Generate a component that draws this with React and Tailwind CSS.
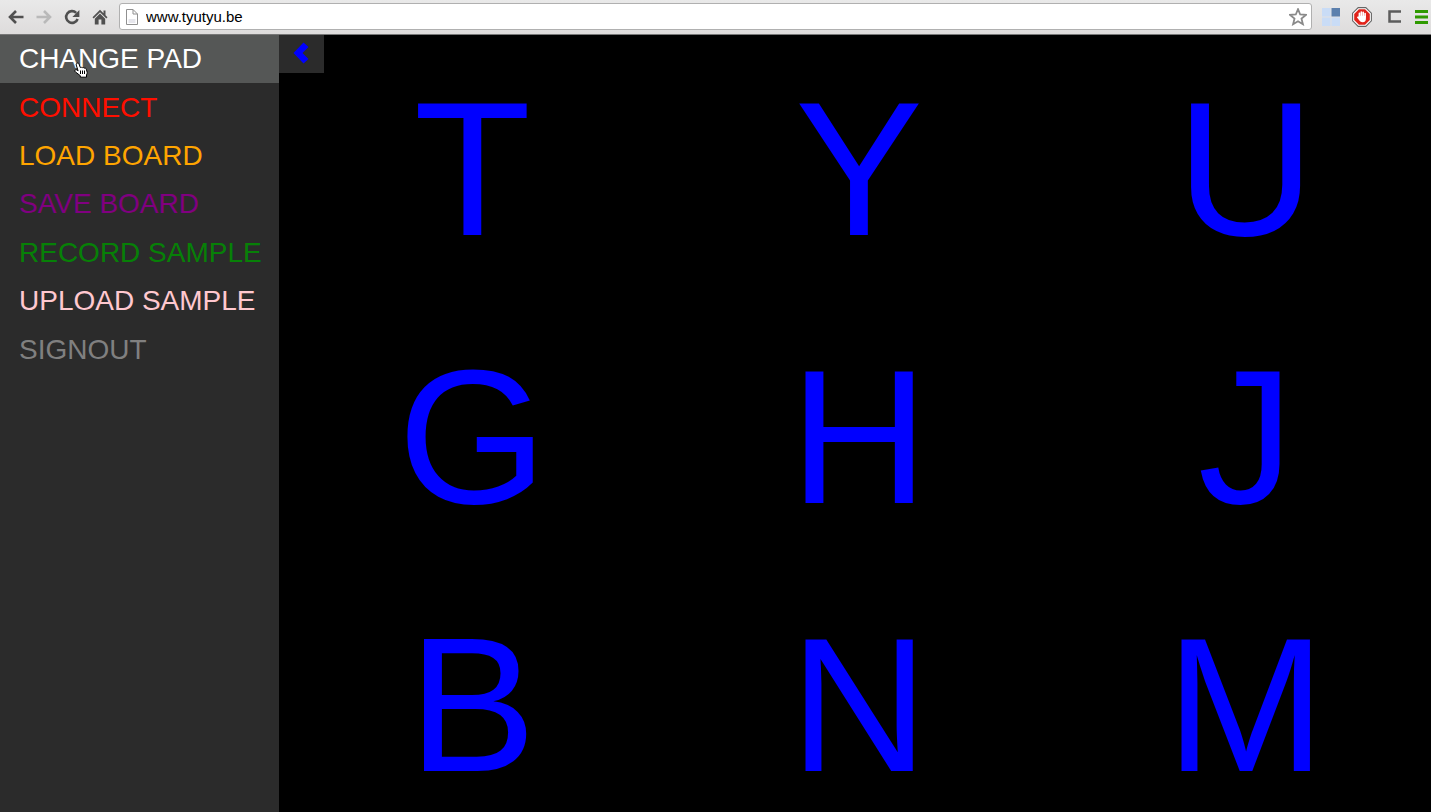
const menu = [
  { label: "CHANGE PAD", style: "bg-[#555756] text-white" },
  { label: "CONNECT", style: "text-[#ff0f00]" },
  { label: "LOAD BOARD", style: "text-[#ffa500]" },
  { label: "SAVE BOARD", style: "text-[#800080]" },
  { label: "RECORD SAMPLE", style: "text-[#078007]" },
  { label: "UPLOAD SAMPLE", style: "text-[#ffc8cf]" },
  { label: "SIGNOUT", style: "text-[#808080]" },
];

const pads = ["T", "Y", "U", "G", "H", "J", "B", "N", "M"];

function Arrow({ className }) {
  return (
    <svg viewBox="0 0 16 14" className={className} fill="none" stroke="currentColor" strokeWidth="2.6">
      <path d="M15.5 7H2.5M8 1L2 7l6 6" />
    </svg>
  );
}

function Reload() {
  return (
    <svg viewBox="0 0 16 16" className="h-4 w-4" fill="none" stroke="#505050" strokeWidth="2.6">
      <path d="M12.2 3.8A5.9 5.9 0 1 0 13.6 10" />
      <path d="M15.4 1v7H8.4z" fill="#505050" stroke="none" />
    </svg>
  );
}

function Home() {
  return (
    <svg viewBox="0 0 16 16" className="h-4 w-4" fill="#505050">
      <path d="M8 .8L.5 8.3l1.2 1.2L8 3.2l6.3 6.3 1.2-1.2-2-2V1.5h-2v2.8z" />
      <path d="M2.8 9.7L8 4.5l5.2 5.2v5.8H9.4v-5H6.6v5H2.8z" />
    </svg>
  );
}

function PageIcon() {
  return (
    <svg viewBox="0 0 12 16" className="h-4 w-3 shrink-0">
      <path d="M.5 .5H7L11.5 5v10.500H.5z" fill="#fff" stroke="#909090" />
      <path d="M7 .5V5h4.500" fill="none" stroke="#909090" />
      <path d="M2.500 10h7v4h-7z" fill="#e6e6ec" />
    </svg>
  );
}

function Star() {
  return (
    <svg viewBox="0 0 18 18" className="h-[18px] w-[18px]" fill="#fff" stroke="#8a8a8a" strokeWidth="1.8">
      <path d="M9 1.200l2.200 5.300 5.700.4-4.400 3.700 1.400 5.600L9 13.200l-4.900 3 1.400-5.600L1.100 6.900l5.700-.4z" />
    </svg>
  );
}

function Tiles() {
  return (
    <svg viewBox="0 0 18 18" className="h-[18px] w-[18px]">
      <rect x="0" y="0" width="8.500" height="8.500" fill="#c9dcf6" />
      <rect x="9.500" y="0" width="8.500" height="8.500" fill="#5c80ad" />
      <rect x="0" y="9.500" width="8.500" height="8.500" fill="#c9dcf6" />
      <rect x="9.500" y="9.500" width="8.500" height="8.500" fill="#c9dcf6" />
    </svg>
  );
}

function StopHand() {
  return (
    <svg viewBox="0 0 20 20" className="h-5 w-5">
      <path d="M6.200.6h7.600l5.600 5.600v7.600l-5.600 5.600H6.200L.6 13.800V6.200z" fill="#fff" stroke="#666" strokeWidth="1.100" />
      <path d="M6.900 2.200h6.200l4.700 4.700v6.200l-4.700 4.700H6.900l-4.700-4.700V6.900z" fill="#e1231a" />
      <g fill="none" stroke="#fff" strokeWidth="1.600" strokeLinecap="round">
        <path d="M7.400 10V6.300M9.300 9V5M11.200 9V5.300M13.100 10V6.600M5.800 10.300l2 2.200" />
      </g>
      <path d="M6.600 8.800h7.300v3.200c0 2-1.300 3.300-3.200 3.300-2 0-3-1-4.100-3z" fill="#fff" />
    </svg>
  );
}

function Hand() {
  return (
    <svg viewBox="0 0 14 16" className="h-4 w-[14px]">
      <path
        d="M3 1.200c.9-.5 1.700 0 2 .8l1.300 3.600c.7-.5 1.500-.4 1.900.2.700-.5 1.600-.3 2 .4.900-.4 1.900.1 2.100 1l.9 3.200c.2 1-.4 1.800-.7 2.600v2.200H6.300v-1.500L1.500 10c-.8-.6-.9-1.500-.3-2 .6-.5 1.300-.3 2 .2l.9.6-1.900-5.900c-.2-.7.200-1.400.8-1.700z"
        fill="#fff"
        stroke="#000"
      />
      <path d="M6.500 8.500v3.500M8.500 8.500v3.500M10.500 8.500v3.500" stroke="#000" />
    </svg>
  );
}

function BrowserBar() {
  return (
    <header className="flex h-[35px] shrink-0 items-center border-b border-[#777] bg-linear-to-b from-[#e9e9e9] to-[#dedcdc] pb-px pl-2 text-[#505050]">
      <nav className="flex items-center gap-3 pr-[11px]">
        <button aria-label="Back"><Arrow className="h-[14px] w-4" /></button>
        <button aria-label="Forward" className="text-[#b9b9b9]"><Arrow className="h-[14px] w-4 -scale-x-100" /></button>
        <button aria-label="Reload"><Reload /></button>
        <button aria-label="Home"><Home /></button>
      </nav>
      <div className="flex h-[27px] min-w-0 flex-1 items-center gap-2 rounded-[3px] border border-[#b0b0b0] bg-white pr-1 pl-[6px]">
        <PageIcon />
        <input
          aria-label="Address"
          defaultValue="www.tyutyu.be"
          className="min-w-0 flex-1 text-[15px] leading-5 text-black outline-none"
        />
        <button aria-label="Bookmark"><Star /></button>
      </div>
      <div className="flex items-center pr-[3px] pl-[10px]">
        <button aria-label="Tiles"><Tiles /></button>
        <button aria-label="Block" className="ml-3"><StopHand /></button>
        <button aria-label="Clipper" className="ml-4">
          <svg viewBox="0 0 13 13" className="h-[13px] w-[13px]" fill="none" stroke="#5c5c5c" strokeWidth="2.500">
            <path d="M13 1.500H1.500v10H13" />
          </svg>
        </button>
        <button aria-label="Menu" className="ml-[14px]">
          <svg viewBox="0 0 13 14" className="h-[14px] w-[13px]" fill="#2f9a00">
            <path d="M0 0h13v3H0zM0 5.500h13v3H0zM0 11h13v3H0z" />
          </svg>
        </button>
      </div>
    </header>
  );
}

export default function App() {
  return (
    <div className="flex h-screen flex-col overflow-hidden bg-black font-['Liberation_Sans',Arial,sans-serif]">
      <BrowserBar />
      <div className="flex min-h-0 flex-1">
        <aside className="w-[279px] shrink-0 bg-[#2b2b2b]">
          <ul className="grid h-[339px] grid-rows-7">
            {menu.map(({ label, style }, i) => (
              <li key={label} className="relative">
                <button className={`flex h-full w-full items-center pl-[19px] text-[28px] whitespace-nowrap ${style}`}>
                  {label}
                </button>
                {i === 0 && (
                  <span className="pointer-events-none absolute top-[27px] left-[74px]">
                    <Hand />
                  </span>
                )}
              </li>
            ))}
          </ul>
        </aside>
        <main className="relative min-w-0 flex-1 overflow-hidden bg-black">
          <div className="-mr-2 grid auto-rows-[268px] grid-cols-3">
            {pads.map((key) => (
              <button key={key} className="flex items-center justify-center text-[192px] leading-none text-[#0000ff]">
                {key}
              </button>
            ))}
          </div>
          <button
            aria-label="Collapse menu"
            className="absolute top-0 left-0 flex h-[38px] w-[45px] items-center justify-center bg-[#2b2b2b] pr-px pb-[3px]"
          >
            <svg viewBox="0 0 16 22" className="h-[22px] w-4" fill="#0000ff">
              <path d="M10.500 .5L.5 11l10 10.500 5-4.500-6-6 6-6z" />
            </svg>
          </button>
        </main>
      </div>
    </div>
  );
}
